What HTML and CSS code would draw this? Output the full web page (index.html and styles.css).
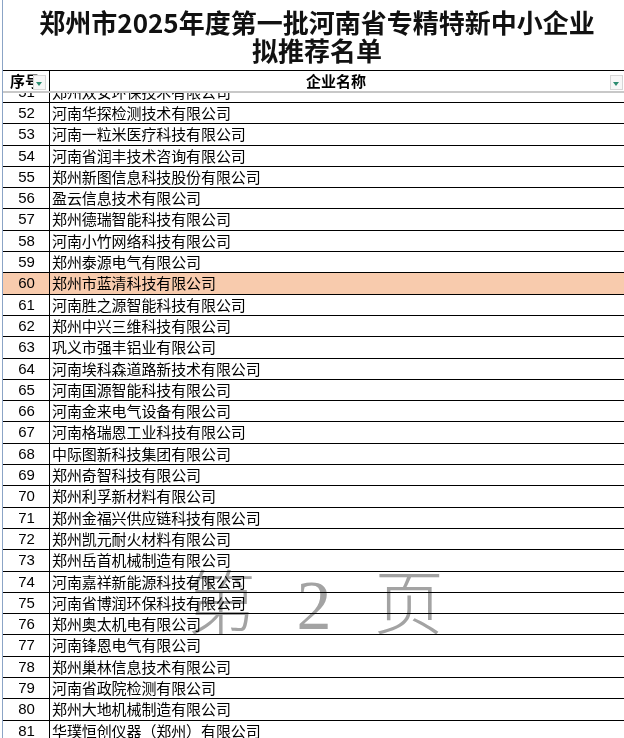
FILE: index.html
```html
<!DOCTYPE html>
<html lang="zh-CN">
<head>
<meta charset="utf-8">
<title>郑州市2025年度第一批河南省专精特新中小企业拟推荐名单</title>
<link rel="stylesheet" href="styles.css">
</head>
<body>
<div class="sheet">
  <div class="title">郑州市2025年度第一批河南省专精特新中小企业<br>拟推荐名单</div>
  <div class="head">
    <div class="c1 hc1">序号<span class="dd"></span></div>
    <div class="c2 hc2">企业名称<span class="dd"></span></div>
  </div>
  <div class="freeze"></div>
  <div class="partial">
    <div class="row inner"><div class="c1">51</div><div class="c2">郑州双安环保技术有限公司</div></div>
  </div>
  <div class="rows">
    <div class="row"><div class="c1">52</div><div class="c2">河南华探检测技术有限公司</div></div>
    <div class="row"><div class="c1">53</div><div class="c2">河南一粒米医疗科技有限公司</div></div>
    <div class="row"><div class="c1">54</div><div class="c2">河南省润丰技术咨询有限公司</div></div>
    <div class="row"><div class="c1">55</div><div class="c2">郑州新图信息科技股份有限公司</div></div>
    <div class="row"><div class="c1">56</div><div class="c2">盈云信息技术有限公司</div></div>
    <div class="row"><div class="c1">57</div><div class="c2">郑州德瑞智能科技有限公司</div></div>
    <div class="row"><div class="c1">58</div><div class="c2">河南小竹网络科技有限公司</div></div>
    <div class="row"><div class="c1">59</div><div class="c2">郑州泰源电气有限公司</div></div>
    <div class="row sel"><div class="c1">60</div><div class="c2">郑州市蓝清科技有限公司</div></div>
    <div class="row"><div class="c1">61</div><div class="c2">河南胜之源智能科技有限公司</div></div>
    <div class="row"><div class="c1">62</div><div class="c2">郑州中兴三维科技有限公司</div></div>
    <div class="row"><div class="c1">63</div><div class="c2">巩义市强丰铝业有限公司</div></div>
    <div class="row"><div class="c1">64</div><div class="c2">河南埃科森道路新技术有限公司</div></div>
    <div class="row"><div class="c1">65</div><div class="c2">河南国源智能科技有限公司</div></div>
    <div class="row"><div class="c1">66</div><div class="c2">河南金来电气设备有限公司</div></div>
    <div class="row"><div class="c1">67</div><div class="c2">河南格瑞恩工业科技有限公司</div></div>
    <div class="row"><div class="c1">68</div><div class="c2">中际图新科技集团有限公司</div></div>
    <div class="row"><div class="c1">69</div><div class="c2">郑州奇智科技有限公司</div></div>
    <div class="row"><div class="c1">70</div><div class="c2">郑州利孚新材料有限公司</div></div>
    <div class="row"><div class="c1">71</div><div class="c2">郑州金福兴供应链科技有限公司</div></div>
    <div class="row"><div class="c1">72</div><div class="c2">郑州凯元耐火材料有限公司</div></div>
    <div class="row"><div class="c1">73</div><div class="c2">郑州岳首机械制造有限公司</div></div>
    <div class="row"><div class="c1">74</div><div class="c2">河南嘉祥新能源科技有限公司</div></div>
    <div class="row"><div class="c1">75</div><div class="c2">河南省博润环保科技有限公司</div></div>
    <div class="row"><div class="c1">76</div><div class="c2">郑州奥太机电有限公司</div></div>
    <div class="row"><div class="c1">77</div><div class="c2">河南锋恩电气有限公司</div></div>
    <div class="row"><div class="c1">78</div><div class="c2">郑州巢林信息技术有限公司</div></div>
    <div class="row"><div class="c1">79</div><div class="c2">河南省政院检测有限公司</div></div>
    <div class="row"><div class="c1">80</div><div class="c2">郑州大地机械制造有限公司</div></div>
    <div class="row"><div class="c1">81</div><div class="c2">华璞恒创仪器（郑州）有限公司</div></div>
  </div>
  <div class="watermark"><span>第</span><span>2</span><span>页</span></div>
</div>
</body>
</html>
```
FILE: styles.css
```css
html, body {
  margin: 0;
  padding: 0;
  background: #fff;
  overflow: hidden;
}
body {
  width: 624px;
  height: 738px;
  font-family: "Liberation Sans", "Noto Sans CJK SC", sans-serif;
  color: #000;
}
.sheet {
  position: relative;
  margin-left: 2px;
  width: 628px;
  height: 738px;
  border-left: 1px solid #8ba4c6;
  overflow: hidden;
}
.title {
  box-sizing: border-box;
  height: 71px;
  padding-top: 8px;
  border-bottom: 1px solid #000;
  font-family: "Noto Sans CJK SC", sans-serif;
  font-weight: 700;
  font-size: 26px;
  line-height: 28px;
  text-align: center;
  color: #111;
}
.head {
  display: grid;
  grid-template-columns: 47px 572px;
  height: 20px;
}
.head .c1, .head .c2 {
  position: relative;
  font-family: "Noto Sans CJK SC", sans-serif;
  font-weight: 700;
  font-size: 15px;
  line-height: 20px;
}
.hc1 {
  padding-left: 7px;
  box-sizing: border-box;
  border-right: 1px solid #000;
  overflow: hidden;
  white-space: nowrap;
}
.hc2 {
  text-align: center;
}
.dd {
  position: absolute;
  top: 4px;
  width: 13px;
  height: 15px;
  box-sizing: border-box;
  border: 1px solid #d6d6d6;
  background: #f7f7f7;
}
.dd::after {
  content: "";
  position: absolute;
  left: 2px;
  top: 6px;
  border-left: 3.5px solid transparent;
  border-right: 3.5px solid transparent;
  border-top: 4px solid #2c8c70;
}
.hc1 .dd { left: 30px; }
.hc2 .dd { right: -1px; }
.freeze {
  height: 2px;
  background: #c8c8c8;
}
.partial {
  height: 10px;
  box-sizing: border-box;
  border-bottom: 1px solid #000;
  overflow: hidden;
}
.partial .inner {
  margin-top: -11.3px;
  border-bottom: 0;
}
.row {
  display: grid;
  grid-template-columns: 47px 572px;
  height: 21.3px;
  box-sizing: border-box;
  border-bottom: 1px solid #000;
  font-size: 15px;
  line-height: 20.3px;
  position: relative;
}
.row .c1 {
  box-sizing: border-box;
  border-right: 1px solid #000;
  text-align: center;
  padding-left: 1px;
}
.row .c2 {
  padding-left: 2px;
  white-space: nowrap;
  font-family: "Noto Sans CJK SC", sans-serif;
  letter-spacing: -0.1px;
}
.row.sel {
  background: #f8cbad;
}
.row.sel::before {
  content: "";
  position: absolute;
  left: -2px;
  top: 0;
  bottom: 0;
  width: 2px;
  background: #3b9a84;
}
.watermark {
  position: absolute;
  left: 183px;
  top: 568px;
  display: flex;
  gap: 26px;
  font-family: "Liberation Serif", "Noto Sans CJK SC", serif;
  font-weight: 300;
  font-size: 70px;
  line-height: 76px;
  color: #a3a3a3;
  mix-blend-mode: multiply;
  pointer-events: none;
}
.watermark span {
  width: 68px;
  text-align: center;
}
```
